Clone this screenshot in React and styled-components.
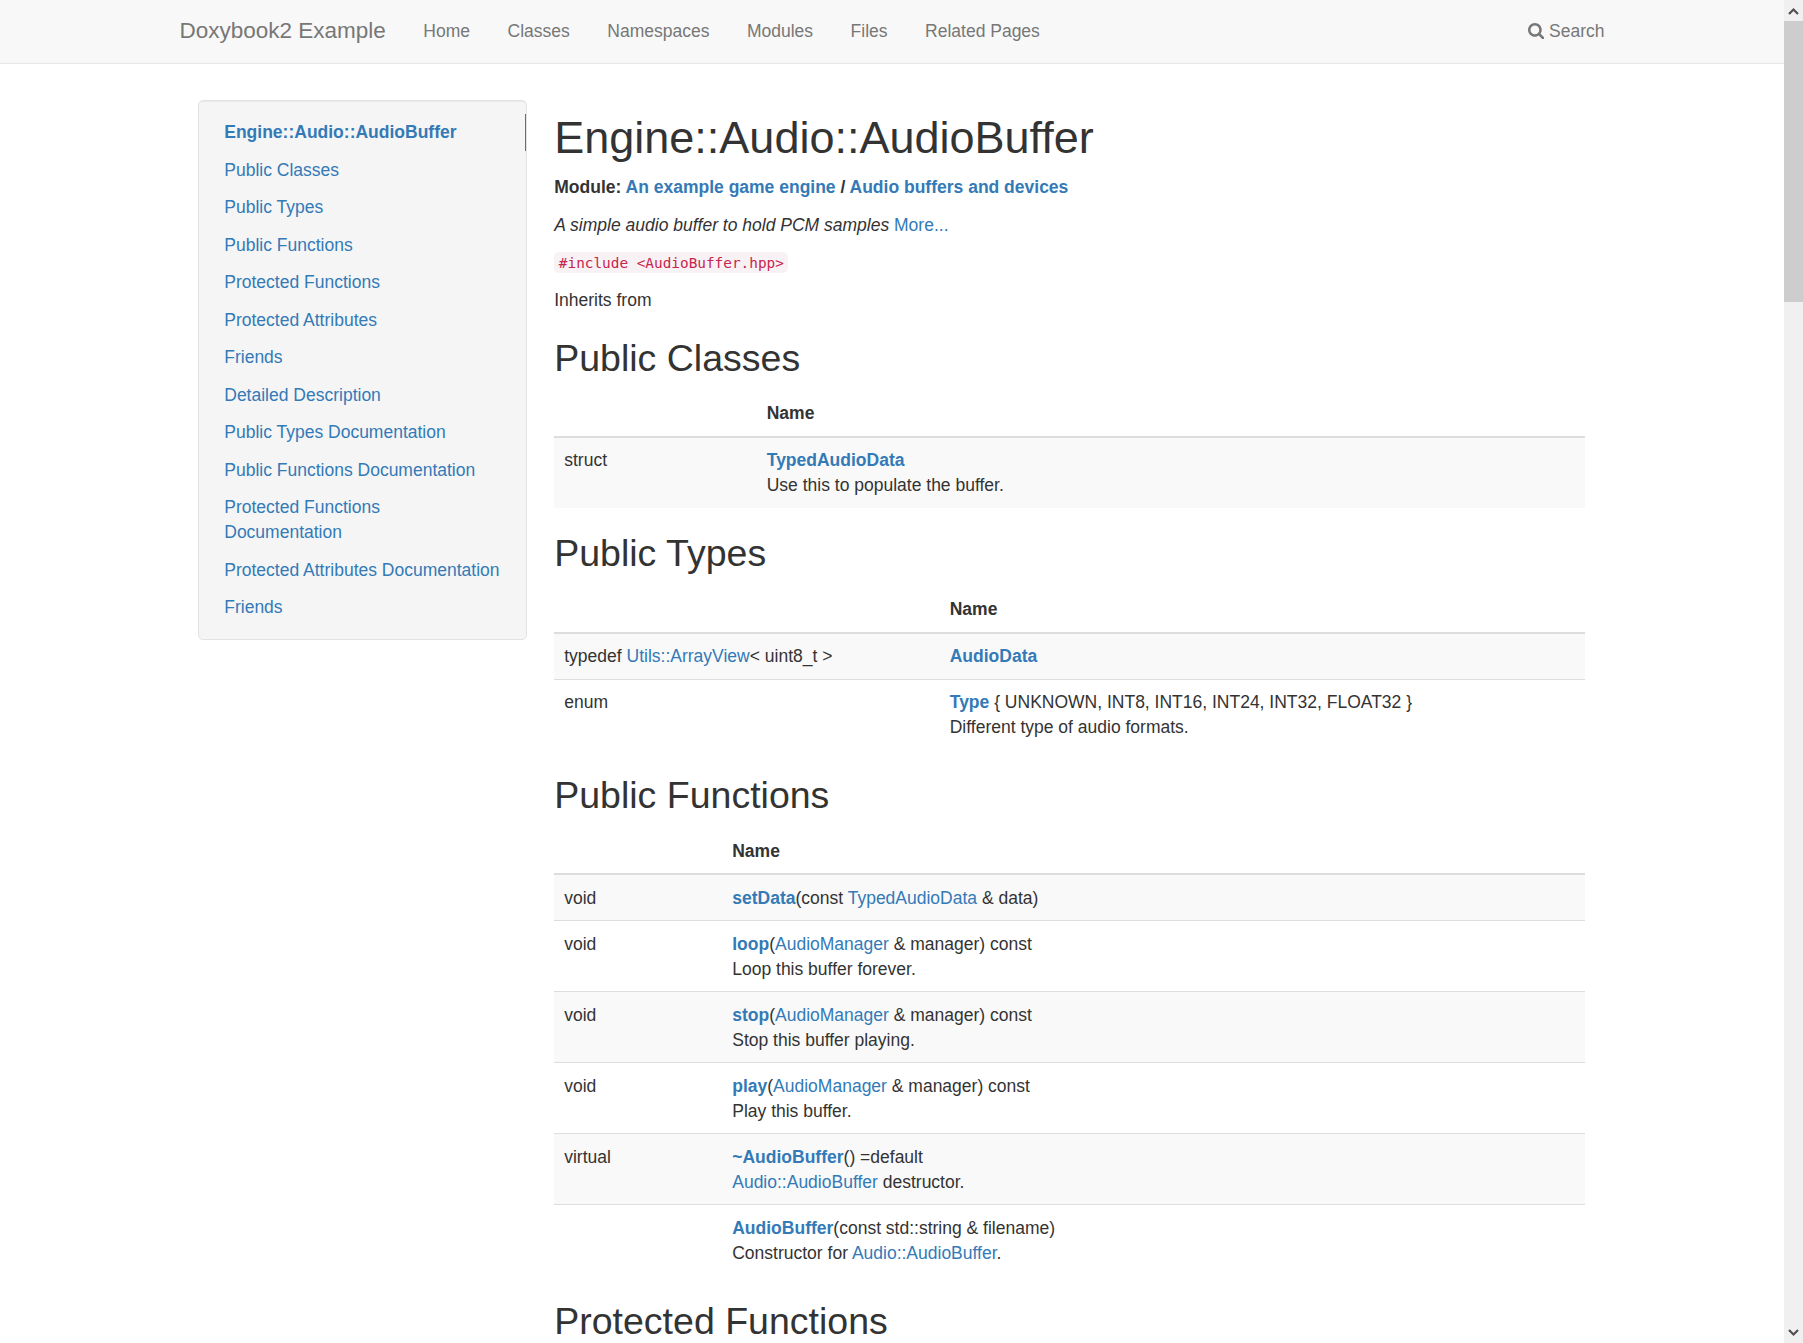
import React from "react";
import styled, { createGlobalStyle } from "styled-components";

const GlobalStyle = createGlobalStyle`
  *, *::before, *::after { box-sizing: border-box; }
  html, body { margin: 0; padding: 0; height: 100%; overflow: hidden; }
  body {
    font-family: "Liberation Sans", Arial, sans-serif;
    font-size: 17.5px;
    line-height: 25px;
    color: #333;
    background: #fff;
  }
`;

const Window = styled.div`
  display: flex;
  height: 1343px;
  overflow: hidden;
`;

const Page = styled.div`
  flex: 1;
  min-width: 0;
  height: 100%;
  overflow: hidden;
`;

const Navbar = styled.header`
  height: 64px;
  background: #f8f8f8;
  border-bottom: 1px solid #e7e7e7;
`;

const NavInner = styled.div`
  display: flex;
  width: 1462.5px;
  height: 62.5px;
  margin: 0 auto;
  align-items: center;
  color: #777;
`;

const Brand = styled.a`
  padding: 0 18.75px;
  font-size: 22.5px;
  line-height: 26px;
`;

const NavLink = styled.a`
  display: flex;
  align-items: center;
  gap: 4.8px;
  padding: 0 18.75px;
  margin-left: ${(p) => (p.$end ? "auto" : "0")};
`;

const SearchIcon = styled.svg`
  width: 16.25px;
  height: 16.25px;
  fill: currentColor;
`;

const Columns = styled.div`
  display: flex;
  align-items: flex-start;
  width: 1462.5px;
  margin: 0 auto;
  padding: 0 37.5px;
`;

const Sidebar = styled.nav`
  width: 328.4px;
  flex: none;
  margin: 36.4px 27.6px 0 0;
  padding: 12.5px 0;
  background: #f5f5f5;
  border: 1px solid #e3e3e3;
  border-radius: 5px;
  box-shadow: inset 0 1px 1px rgba(0, 0, 0, 0.05);
`;

const SideLink = styled.a`
  display: block;
  padding: 6.25px 25px;
  color: #337ab7;
  font-weight: ${(p) => (p.$active ? 700 : 400)};
  border-right: 1px solid ${(p) => (p.$active ? "#337ab7" : "transparent")};
`;

const Main = styled.main`
  width: 1031.25px;
  flex: none;
  padding-top: 48.5px;
`;

const Title = styled.h1`
  margin: 0 0 12.5px;
  font-size: 45px;
  font-weight: 400;
  line-height: 49.5px;
`;

const Heading = styled.h2`
  margin: 25px 0 ${(p) => p.$gap || 12}px;
  font-size: 37.5px;
  font-weight: 400;
  line-height: 41px;
`;

const Para = styled.p`
  margin: 0 0 ${(p) => p.$gap || 12.5}px;
  font-weight: ${(p) => (p.$strong ? 700 : 400)};
`;

const Link = styled.a`
  color: #337ab7;
  font-weight: ${(p) => (p.$strong ? 700 : "inherit")};
`;

const Code = styled.code`
  padding: 2.5px 4.6px;
  font-family: "DejaVu Sans Mono", monospace;
  font-size: 14.38px;
  color: #c7254e;
  background: #f9f2f4;
  border-radius: 5px;
`;

const Table = styled.table`
  width: 100%;
  table-layout: fixed;
  border-collapse: separate;
  border-spacing: 0;
  margin-bottom: ${(p) => 25 + p.$nudge}px;

  th { padding: 11px 10px ${(p) => 10 - p.$nudge}px; }
  td { padding: ${(p) => 10 + p.$nudge}px 10px ${(p) => 10 - p.$nudge}px; }
  tbody tr:nth-of-type(odd) { background: #f9f9f9; }
  tbody tr:first-of-type td { border-top: 0; }
`;

const Th = styled.th`
  width: ${(p) => (p.$w ? p.$w + "px" : "auto")};
  text-align: left;
  border-bottom: 2px solid #ddd;
`;

const Td = styled.td`
  vertical-align: top;
  border-top: 1px solid #ddd;
`;

const Scrollbar = styled.div`
  display: flex;
  flex-direction: column;
  flex: none;
  width: 19px;
  background: #f0f0f0;
`;

const ScrollButton = styled.div`
  display: flex;
  align-items: center;
  justify-content: center;
  height: 21px;
`;

const ScrollThumb = styled.div`
  height: 281px;
  margin-bottom: auto;
  background: #cdcdcd;
`;

const Arrow = ({ down }) => (
  <svg width="11" height="8" viewBox="0 0 11 8">
    <path d={down ? "M1 1L5.5 5.5L10 1" : "M1 7L5.5 2.5L10 7"} fill="none" stroke="#505050" strokeWidth="2.2" />
  </svg>
);

const navLinks = ["Home", "Classes", "Namespaces", "Modules", "Files", "Related Pages"];

const sideLinks = [
  "Engine::Audio::AudioBuffer",
  "Public Classes",
  "Public Types",
  "Public Functions",
  "Protected Functions",
  "Protected Attributes",
  "Friends",
  "Detailed Description",
  "Public Types Documentation",
  "Public Functions Documentation",
  "Protected Functions Documentation",
  "Protected Attributes Documentation",
  "Friends",
];

const managerFn = (name, text) => ({
  kind: "void",
  body: (
    <>
      <Link $strong>{name}</Link>(<Link>AudioManager</Link> &amp; manager) const
      <br />
      {text}
    </>
  ),
});

const sections = [
  {
    title: "Public Classes",
    width: 202.5,
    gap: 11,
    nudge: 0,
    rows: [
      {
        kind: "struct",
        body: (
          <>
            <Link $strong>TypedAudioData</Link>
            <br />
            Use this to populate the buffer.
          </>
        ),
      },
    ],
  },
  {
    title: "Public Types",
    width: 385.5,
    gap: 12,
    nudge: 0,
    rows: [
      {
        kind: (
          <>
            typedef <Link>Utils::ArrayView</Link>&lt; uint8_t &gt;
          </>
        ),
        body: <Link $strong>AudioData</Link>,
      },
      {
        kind: "enum",
        body: (
          <>
            <Link $strong>Type</Link> {"{ UNKNOWN, INT8, INT16, INT24, INT32, FLOAT32 }"}
            <br />
            Different type of audio formats.
          </>
        ),
      },
    ],
  },
  {
    title: "Public Functions",
    width: 168,
    gap: 12,
    nudge: 1,
    rows: [
      {
        kind: "void",
        body: (
          <>
            <Link $strong>setData</Link>(const <Link>TypedAudioData</Link> &amp; data)
          </>
        ),
      },
      managerFn("loop", "Loop this buffer forever."),
      managerFn("stop", "Stop this buffer playing."),
      managerFn("play", "Play this buffer."),
      {
        kind: "virtual",
        body: (
          <>
            <Link $strong>~AudioBuffer</Link>() =default
            <br />
            <Link>Audio::AudioBuffer</Link> destructor.
          </>
        ),
      },
      {
        kind: "",
        body: (
          <>
            <Link $strong>AudioBuffer</Link>(const std::string &amp; filename)
            <br />
            Constructor for <Link>Audio::AudioBuffer</Link>.
          </>
        ),
      },
    ],
  },
];

const MemberTable = ({ title, width, gap, nudge, rows }) => (
  <>
    <Heading $gap={gap}>{title}</Heading>
    <Table $nudge={nudge}>
      <thead>
        <tr>
          <Th $w={width} />
          <Th>Name</Th>
        </tr>
      </thead>
      <tbody>
        {rows.map((row, i) => (
          <tr key={i}>
            <Td>{row.kind}</Td>
            <Td>{row.body}</Td>
          </tr>
        ))}
      </tbody>
    </Table>
  </>
);

export default function App() {
  return (
    <Window>
      <GlobalStyle />
      <Page>
        <Navbar>
          <NavInner>
            <Brand>Doxybook2 Example</Brand>
            {navLinks.map((label) => (
              <NavLink key={label}>{label}</NavLink>
            ))}
            <NavLink $end>
              <SearchIcon viewBox="0 0 1664 1664">
                <path d="M1152 704q0-185-131.5-316.5T704 256 387.5 387.5 256 704t131.5 316.5T704 1152t316.5-131.5T1152 704zm512 832q0 52-38 90t-90 38q-54 0-90-38l-343-342q-179 124-399 124-143 0-273.5-55.5t-225-150-150-225T0 704t55.5-273.5 150-225 225-150T704 0t273.5 55.5 225 150 150 225T1408 704q0 220-124 399l343 343q37 37 37 90z" />
              </SearchIcon>
              Search
            </NavLink>
          </NavInner>
        </Navbar>
        <Columns>
          <Sidebar>
            {sideLinks.map((label, i) => (
              <SideLink key={i} $active={i === 0}>
                {label}
              </SideLink>
            ))}
          </Sidebar>
          <Main>
            <Title>Engine::Audio::AudioBuffer</Title>
            <Para $strong $gap={13.5}>
              Module: <Link>An example game engine</Link> / <Link>Audio buffers and devices</Link>
            </Para>
            <Para $gap={11.5}>
              <em>A simple audio buffer to hold PCM samples</em> <Link>More...</Link>
            </Para>
            <Para>
              <Code>{"#include <AudioBuffer.hpp>"}</Code>
            </Para>
            <Para>Inherits from</Para>
            {sections.map((section) => (
              <MemberTable key={section.title} {...section} />
            ))}
            <Heading>Protected Functions</Heading>
          </Main>
        </Columns>
      </Page>
      <Scrollbar>
        <ScrollButton>
          <Arrow />
        </ScrollButton>
        <ScrollThumb />
        <ScrollButton>
          <Arrow down />
        </ScrollButton>
      </Scrollbar>
    </Window>
  );
}
